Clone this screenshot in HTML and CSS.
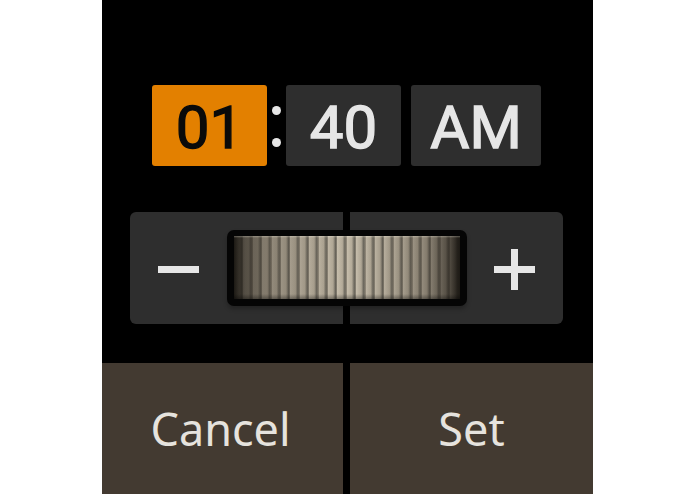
FILE: index.html
```html
<!DOCTYPE html>
<html lang="en">
<head>
    <meta charset="UTF-8">
    <meta name="viewport" content="width=device-width, initial-scale=1.0">
    <title>Set Time</title>
    <link rel="stylesheet" href="styles.css">
</head>
<body>
    <div class="screen">
        <!-- Time fields -->
        <div class="time-row">
            <div class="field hour active">01</div>
            <div class="colon"><span></span><span></span></div>
            <div class="field minute">40</div>
            <div class="field ampm">AM</div>
        </div>

        <!-- Jog dial -->
        <div class="dial-panel">
            <button class="dial-half minus">
                <svg width="41" height="7" viewBox="0 0 41 7"><rect width="41" height="7" fill="#e6e6e6"/></svg>
            </button>
            <button class="dial-half plus">
                <svg width="41" height="41" viewBox="0 0 41 41"><path d="M0 17h17V0h7v17h17v7H24v17h-7V24H0z" fill="#e6e6e6"/></svg>
            </button>
            <div class="knob"><div class="knob-ribs"></div></div>
        </div>

        <!-- Actions -->
        <div class="actions">
            <button class="action cancel">Cancel</button>
            <button class="action">Set</button>
        </div>
    </div>
</body>
</html>
```

FILE: styles.css
```css
body {
    margin: 0;
    background-color: #fff;
    font-family: "Noto Sans", "Open Sans", sans-serif;
}
.screen {
    width: 491px;
    height: 494px;
    margin-left: 102px;
    background-color: #000;
    display: flex;
    flex-direction: column;
    overflow: hidden;
}
.time-row {
    display: flex;
    margin: 85px 0 0 50px;
    height: 81px;
}
.field {
    width: 115px;
    display: flex;
    align-items: center;
    justify-content: center;
    padding-top: 3px;
    box-sizing: border-box;
    background-color: #2e2e2e;
    border-radius: 3px;
    color: #e6e6e6;
    font-family: Roboto, sans-serif;
    font-weight: 400;
    font-size: 60px;
    -webkit-text-stroke: 1.4px currentColor;
}
.field.active {
    background-color: #e38000;
    color: #0a0a0a;
}
.field.ampm {
    width: 130px;
    margin-left: 10px;
}
.colon {
    width: 19px;
    display: flex;
    flex-direction: column;
    align-items: center;
    justify-content: center;
    gap: 23px;
    padding-top: 2px;
    box-sizing: border-box;
}
.colon span {
    width: 9px;
    height: 9px;
    border-radius: 50%;
    background-color: #e6e6e6;
}
.dial-panel {
    position: relative;
    display: grid;
    grid-template-columns: 213px 213px;
    column-gap: 7px;
    width: 433px;
    height: 112px;
    margin: 46px 0 0 28px;
}
.dial-half {
    border: none;
    padding: 2px 0 0;
    background-color: #2e2e2e;
    display: flex;
    align-items: center;
}
.dial-half.minus {
    border-radius: 6px 0 0 6px;
    padding-left: 28px;
}
.dial-half.plus {
    border-radius: 0 6px 6px 0;
    justify-content: flex-end;
    padding-right: 28px;
}
.knob {
    position: absolute;
    left: 97px;
    top: 18px;
    width: 240px;
    height: 76px;
    box-sizing: border-box;
    padding: 6px 7px 7px;
    background-color: #050505;
    border-radius: 7px;
    box-shadow: 0 3px 4px rgba(0, 0, 0, 0.25);
}
.knob-ribs {
    height: 100%;
    background-image:
        linear-gradient(to bottom, rgba(255, 250, 235, 0.3) 0, rgba(255, 250, 235, 0) 2px, rgba(0, 0, 0, 0) 92%, rgba(0, 0, 0, 0.35) 100%),
        linear-gradient(to right, #1c1914 0, rgba(40, 35, 28, 0.7) 5%, rgba(60, 52, 42, 0.4) 15%, rgba(60, 52, 42, 0.15) 32%, rgba(0, 0, 0, 0) 48%, rgba(0, 0, 0, 0) 52%, rgba(60, 52, 42, 0.15) 68%, rgba(60, 52, 42, 0.4) 85%, rgba(40, 35, 28, 0.7) 95%, #1c1914 100%),
        repeating-linear-gradient(to right, #c8bfad 0, #b4ab99 5px, #6a665c 7.5px, #948c7d 9.4px);
}
.actions {
    display: grid;
    grid-template-columns: 241px 243px;
    column-gap: 7px;
    height: 131px;
    margin-top: 39px;
}
.action {
    border: none;
    padding: 0;
    background-color: #433a31;
    color: #e6e3de;
    font-family: "Noto Sans", "Open Sans", sans-serif;
    font-size: 45px;
}
.action.cancel {
    padding-right: 4px;
}
```
